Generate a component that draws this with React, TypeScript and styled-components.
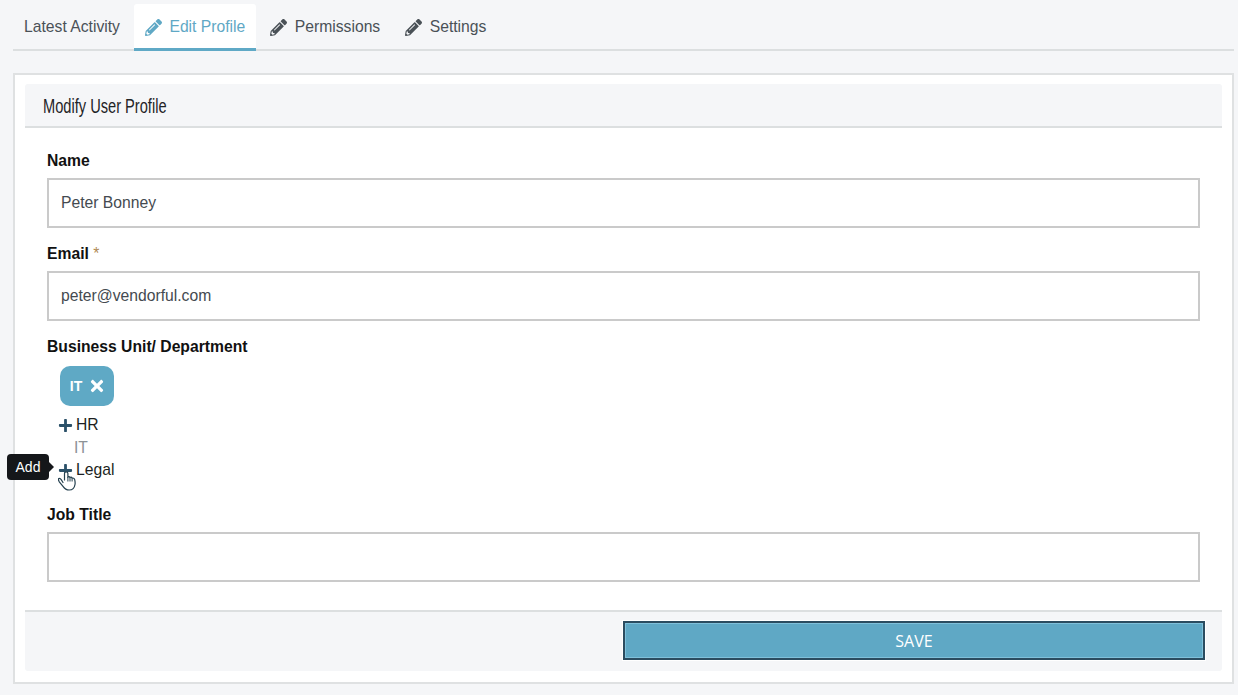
import React from 'react'
import styled, { createGlobalStyle } from 'styled-components'
import { FaPencilAlt, FaPlus, FaTimes } from 'react-icons/fa'

const GlobalStyle = createGlobalStyle`
  html, body {
    margin: 0;
    padding: 0;
    background: #f5f6f8;
    font-family: "Liberation Sans", Arial, sans-serif;
  }
  * { box-sizing: border-box; }
`

const Page = styled.div`
  width: 1238px;
  height: 695px;
  padding: 4px 4px 0 13px;
  overflow: hidden;
`

const Tabs = styled.nav`
  display: flex;
  gap: 3px;
  height: 47px;
  border-bottom: 2px solid #dcdfe0;
`

const Tab = styled.div<{ $active?: boolean }>`
  display: flex;
  align-items: center;
  gap: 7.5px;
  height: 47px;
  padding: 2px 11px 0;
  border-bottom: 3px solid ${({ $active }) => ($active ? '#5fa9c6' : 'transparent')};
  border-radius: 3px 3px 0 0;
  background: ${({ $active }) => ($active ? '#ffffff' : 'transparent')};
  color: ${({ $active }) => ($active ? '#5fa8c5' : '#4a5157')};
  font-size: 15.7px;
  svg { font-size: 17px; }
`

const Card = styled.section`
  height: 611px;
  margin-top: 22px;
  padding: 9px 10px;
  background: #ffffff;
  border: 2px solid #dfe1e2;
`

const CardHeader = styled.header`
  display: flex;
  align-items: center;
  height: 44px;
  padding: 2px 0 0 18px;
  background: #f5f6f8;
  border-bottom: 2px solid #dcdfe0;
  border-radius: 3px 3px 0 0;
`

const HeaderTitle = styled.h2`
  margin: 0;
  color: #1f2427;
  font-size: 19.5px;
  font-weight: 400;
  white-space: nowrap;
  transform: scaleX(0.75);
  transform-origin: left center;
`

const Form = styled.div`
  height: 482px;
  padding: 24px 22px 0;
`

const Label = styled.div`
  height: 18px;
  margin-bottom: 8px;
  line-height: 18px;
  color: #111111;
  font-size: 15.7px;
  font-weight: 700;
`

const DepartmentLabel = styled(Label)`
  margin-bottom: 0;
`

const Required = styled.span`
  color: #b08a55;
  font-weight: 400;
`

const Input = styled.div<{ $tall?: boolean }>`
  display: flex;
  align-items: center;
  height: ${({ $tall }) => ($tall ? '50.5px' : '49.5px')};
  margin-bottom: 17.5px;
  padding: 0 12px;
  border: 2px solid #cacaca;
  color: #444a50;
  font-size: 15.7px;
`

const Chip = styled.div`
  display: flex;
  align-items: center;
  justify-content: center;
  gap: 6px;
  width: 54px;
  height: 40px;
  margin: 10px 0 8px 13px;
  padding-left: 2px;
  background: #5fa9c5;
  border-radius: 10px;
  color: #ffffff;
  font-size: 14px;
  font-weight: 700;
  svg { font-size: 18px; }
`

const Options = styled.ul`
  margin: 0 0 24px;
  padding: 0 0 0 11px;
  list-style: none;
`

const Option = styled.li<{ $muted?: boolean }>`
  position: relative;
  display: flex;
  align-items: center;
  gap: 3px;
  height: 22.5px;
  padding-left: ${({ $muted }) => ($muted ? '16px' : '0')};
  color: ${({ $muted }) => ($muted ? '#8d9296' : '#1c1f22')};
  font-size: 15.7px;
  svg.plus { color: #2b5169; font-size: 15px; }
`

const Tooltip = styled.div`
  position: absolute;
  left: -51px;
  top: -5px;
  display: flex;
  align-items: center;
  justify-content: center;
  width: 42px;
  height: 26px;
  background: #15171a;
  border-radius: 4px;
  color: #ffffff;
  font-size: 14px;

  &::after {
    content: '';
    position: absolute;
    right: -5px;
    top: 7px;
    border-left: 6px solid #15171a;
    border-top: 6px solid transparent;
    border-bottom: 6px solid transparent;
  }
`

const Cursor = styled.svg`
  position: absolute;
  left: 0;
  top: 12px;
  width: 20px;
  height: 20px;
`

const Footer = styled.footer`
  display: flex;
  justify-content: flex-end;
  height: 61px;
  padding: 9px 17px 0 0;
  background: #f5f6f8;
  border-top: 2px solid #dcdfe0;
  border-radius: 0 0 3px 3px;
`

const SaveButton = styled.button`
  width: 582px;
  height: 39px;
  padding: 0;
  background: #5fa8c5;
  border: 2px solid #2b4c60;
  box-shadow: inset 0 0 0 1px #7fc0da;
  outline: 1px solid #ffffff;
  color: #ffffff;
  font-family: "Open Sans", sans-serif;
  font-size: 16px;
`

const App = () => (
  <Page>
    <GlobalStyle />
    <Tabs>
      <Tab>Latest Activity</Tab>
      <Tab $active><FaPencilAlt />Edit Profile</Tab>
      <Tab><FaPencilAlt />Permissions</Tab>
      <Tab><FaPencilAlt />Settings</Tab>
    </Tabs>
    <Card>
      <CardHeader>
        <HeaderTitle>Modify User Profile</HeaderTitle>
      </CardHeader>
      <Form>
        <Label>Name</Label>
        <Input>Peter Bonney</Input>
        <Label>Email <Required>*</Required></Label>
        <Input>peter@vendorful.com</Input>
        <DepartmentLabel>Business Unit/ Department</DepartmentLabel>
        <Chip>IT <FaTimes /></Chip>
        <Options>
          <Option><FaPlus className="plus" />HR</Option>
          <Option $muted>IT</Option>
          <Option>
            <FaPlus className="plus" />Legal
            <Tooltip>Add</Tooltip>
            <Cursor viewBox="0 0 20 20" fill="none">
              <path
                d="M6.500 9V2.500C6.500 1.500 7.200.8 8.200.8s1.700.7 1.700 1.700V6c.8-.4 1.700-.2 2.100.5.8-.4 1.700-.2 2.100.6.9-.3 2.300.2 2.600 1.500.4 1.700.6 3.200.3 4.900-.5 3.300-2.500 5.500-5.800 5.500-3 0-4.700-1.300-6-3.400L1.300 10.800C.6 9.700 0 8 .8 7.600c1-.5 1.800.2 2.400 1.100L5 11.500"
                fill="#ffffff"
                stroke="#24404f"
                strokeWidth="1.200"
                strokeLinecap="round"
              />
              <path d="M9.900 6v4.500M12 6.500v4M14.100 7.100v3.400" stroke="#24404f" strokeWidth="1" />
            </Cursor>
          </Option>
        </Options>
        <Label>Job Title</Label>
        <Input $tall />
      </Form>
      <Footer>
        <SaveButton>SAVE</SaveButton>
      </Footer>
    </Card>
  </Page>
)

export default App
